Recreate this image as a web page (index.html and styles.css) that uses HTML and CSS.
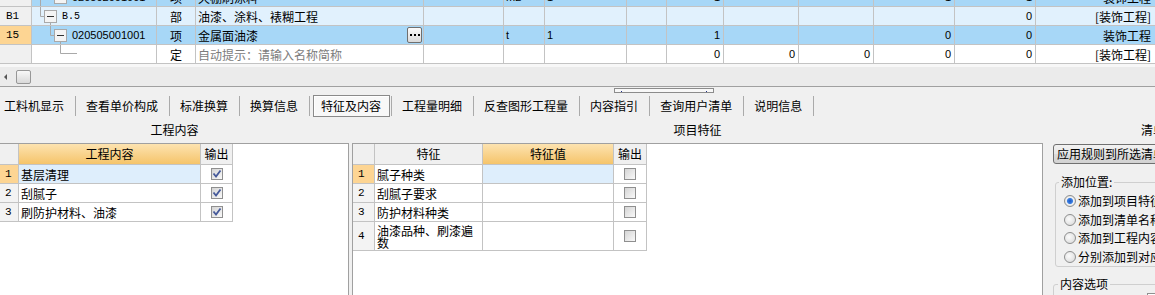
FILE: index.html
```html
<!DOCTYPE html>
<html lang="zh-CN">
<head>
<meta charset="utf-8">
<title>特征及内容</title>
<link rel="stylesheet" href="styles.css">
</head>
<body>
<div class="app">
  <div class="top-grid">
    <div class="trow partial sel">
      <div class="rn">14</div>
      <div class="tree">
        <svg width="40" height="18" viewBox="0 0 40 18"><path d="M8.5 0V18M18.5 0V9.5H22.5" stroke="#a9a9a9" fill="none"/><rect x="22.5" y="3.5" width="12" height="12" fill="#f4f4f4" stroke="#a9a9a9"/><path d="M25 9.5H32" stroke="#333"/></svg>
        <span class="code">020502001001</span>
      </div>
      <div class="c">项</div>
      <div>天棚刷涂料</div>
      <div></div>
      <div class="num">m2</div>
      <div class="num">1</div>
      <div></div>
      <div class="num r">1</div>
      <div></div>
      <div></div>
      <div class="num r">1</div>
      <div class="num r">1</div>
      <div class="r last">装饰工程</div>
    </div>
    <div class="trow light">
      <div class="rn">B1</div>
      <div class="tree">
        <svg width="30" height="18" viewBox="0 0 30 18"><path d="M8.5 0V9.5H12.5M18.5 15.5V18" stroke="#a9a9a9" fill="none"/><rect x="12.5" y="3.5" width="12" height="12" fill="#f4f4f4" stroke="#a9a9a9"/><path d="M15 9.5H22" stroke="#333"/></svg>
        <span class="mono">B.5</span>
      </div>
      <div class="c">部</div>
      <div>油漆、涂料、裱糊工程</div>
      <div></div>
      <div></div>
      <div></div>
      <div></div>
      <div></div>
      <div></div>
      <div></div>
      <div></div>
      <div class="num r">0</div>
      <div class="r last">[装饰工程]</div>
    </div>
    <div class="trow sel">
      <div class="rn cur">15</div>
      <div class="tree">
        <svg width="40" height="18" viewBox="0 0 40 18"><path d="M18.5 0V9.5H22.5M28.5 15.5V18" stroke="#a9a9a9" fill="none"/><rect x="22.5" y="3.5" width="12" height="12" fill="#f4f4f4" stroke="#a9a9a9"/><path d="M25 9.5H32" stroke="#333"/></svg>
        <span class="code">020505001001</span>
      </div>
      <div class="c">项</div>
      <div class="namecell"><span>金属面油漆</span><span class="ell"><i></i><i></i><i></i></span></div>
      <div></div>
      <div class="num">t</div>
      <div class="num">1</div>
      <div></div>
      <div class="num r">1</div>
      <div></div>
      <div></div>
      <div class="num r">0</div>
      <div class="num r">0</div>
      <div class="r last">装饰工程</div>
    </div>
    <div class="trow">
      <div class="rn"></div>
      <div class="tree">
        <svg width="46" height="18" viewBox="0 0 46 18"><path d="M28.5 0V8.5H45" stroke="#a9a9a9" fill="none"/></svg>
      </div>
      <div class="c">定</div>
      <div class="hint">自动提示：请输入名称简称</div>
      <div></div>
      <div></div>
      <div></div>
      <div></div>
      <div class="num r">0</div>
      <div class="num r">0</div>
      <div class="num r">0</div>
      <div class="num r">0</div>
      <div class="num r">0</div>
      <div class="r last">[装饰工程]</div>
    </div>
  </div>

  <div class="hscroll">
    <span class="arrow"></span>
    <span class="thumb"></span>
  </div>

  <div class="grip-row">
    <div class="grip"><i></i><i></i></div>
  </div>

  <div class="tabs">
    <span class="tab">工料机显示</span><i class="sep"></i>
    <span class="tab">查看单价构成</span><i class="sep"></i>
    <span class="tab">标准换算</span><i class="sep"></i>
    <span class="tab">换算信息</span><i class="sep"></i>
    <span class="tab active">特征及内容</span><i class="sep"></i>
    <span class="tab">工程量明细</span><i class="sep"></i>
    <span class="tab">反查图形工程量</span><i class="sep"></i>
    <span class="tab">内容指引</span><i class="sep"></i>
    <span class="tab">查询用户清单</span><i class="sep"></i>
    <span class="tab">说明信息</span><i class="sep"></i>
  </div>

  <div class="bottom">
    <div class="col col-left">
      <div class="title">工程内容</div>
      <div class="panel">
        <div class="g lgrid">
          <div class="h"></div>
          <div class="h o">工程内容</div>
          <div class="h">输出</div>

          <div class="rn cur">1</div>
          <div class="selc">基层清理</div>
          <div class="cbc"><span class="cb"><svg width="10" height="10" viewBox="0 0 10 10"><path d="M1.5 4.5L4 7.5L8.5 1.5" stroke="#45599a" stroke-width="1.8" fill="none"/></svg></span></div>

          <div class="rn">2</div>
          <div>刮腻子</div>
          <div class="cbc"><span class="cb"><svg width="10" height="10" viewBox="0 0 10 10"><path d="M1.5 4.5L4 7.5L8.5 1.5" stroke="#45599a" stroke-width="1.8" fill="none"/></svg></span></div>

          <div class="rn">3</div>
          <div>刷防护材料、油漆</div>
          <div class="cbc"><span class="cb"><svg width="10" height="10" viewBox="0 0 10 10"><path d="M1.5 4.5L4 7.5L8.5 1.5" stroke="#45599a" stroke-width="1.8" fill="none"/></svg></span></div>
        </div>
      </div>
    </div>

    <div class="col col-mid">
      <div class="title">项目特征</div>
      <div class="panel">
        <div class="g mgrid">
          <div class="h"></div>
          <div class="h">特征</div>
          <div class="h o">特征值</div>
          <div class="h">输出</div>

          <div class="rn cur">1</div>
          <div>腻子种类</div>
          <div class="selc"></div>
          <div class="cbc"><span class="cb"></span></div>

          <div class="rn">2</div>
          <div>刮腻子要求</div>
          <div></div>
          <div class="cbc"><span class="cb"></span></div>

          <div class="rn">3</div>
          <div>防护材料种类</div>
          <div></div>
          <div class="cbc"><span class="cb"></span></div>

          <div class="rn tall">4</div>
          <div class="tall wrap">油漆品种、刷漆遍数</div>
          <div class="tall"></div>
          <div class="cbc tall"><span class="cb"></span></div>
        </div>
      </div>
    </div>

    <div class="col col-right">
      <div class="title">清单规则</div>
      <div class="rbody">
        <div class="apply">应用规则到所选清单</div>
        <fieldset class="grp grp1">
          <legend>添加位置:</legend>
          <div class="ropt"><span class="rb on"></span><span>添加到项目特征列</span></div>
          <div class="ropt"><span class="rb"></span><span>添加到清单名称列</span></div>
          <div class="ropt"><span class="rb"></span><span>添加到工程内容列</span></div>
          <div class="ropt"><span class="rb"></span><span>分别添加到对应列</span></div>
        </fieldset>
        <fieldset class="grp grp2">
          <legend>内容选项</legend>
          <div class="inbox"></div>
        </fieldset>
      </div>
    </div>
  </div>
</div>
</body>
</html>
```

FILE: styles.css
```css
* {
  box-sizing: border-box;
}

html,
body {
  margin: 0;
  padding: 0;
}

body {
  width: 1155px;
  height: 295px;
  overflow: hidden;
  background: #f0f0f0;
  font-family: "Noto Sans CJK SC", "Liberation Sans", sans-serif;
  font-size: 12px;
  line-height: 1.2;
  color: #000;
}

/* ---------- top grid ---------- */
.top-grid {
  height: 64px;
  overflow: hidden;
  background: #fff;
}

.trow {
  display: grid;
  grid-template-columns: 32px 125px 39px 228px 80px 41px 82px 40px 57px 75px 75px 81px 81px 119px;
  height: 19px;
}

.trow.partial {
  margin-top: -12px;
}

.trow > div {
  border-right: 1px solid #c3c3c3;
  border-bottom: 1px solid #c3c3c3;
  overflow: hidden;
  white-space: nowrap;
  line-height: 19px;
  padding: 0 2px;
  background: #fff;
}

.trow.sel > div {
  background: #a7d7f7;
}

.trow.light > div {
  background: #e1f1fd;
}

.trow > div.rn {
  background: #f0f0f0;
  font-family: "Liberation Mono", monospace;
  font-size: 11px;
  padding-left: 6px;
}

.trow > div.rn.cur {
  background: #fdd593;
}

.trow > .c {
  text-align: center;
}

.trow > .r {
  text-align: right;
  padding-right: 3px;
}

.trow > .last {
  padding-right: 4px;
  border-right: 0;
}

.trow > div.tree {
  display: flex;
  align-items: flex-start;
  padding: 0;
}

.tree svg {
  flex: none;
  display: block;
}

.num,
.code {
  font-family: "Liberation Sans", sans-serif;
  font-size: 11px;
}

.mono {
  font-family: "Liberation Mono", monospace;
  font-size: 10px;
}

.hint {
  color: #7c7c7c;
}

.trow > div.namecell {
  display: flex;
  align-items: center;
  padding-right: 1px;
}

.ell {
  margin-left: auto;
  flex: none;
  width: 15px;
  height: 16px;
  border: 1px solid #6f6f6f;
  border-radius: 2px;
  background: linear-gradient(#fbfbfb, #dadada);
  display: flex;
  align-items: center;
  justify-content: center;
  gap: 2px;
}

.ell i {
  width: 2px;
  height: 2px;
  background: #000;
}

/* ---------- scrollbar & splitter ---------- */
.hscroll {
  height: 23px;
  background: #ebebeb;
  border-top: 3px solid #f7f7f7;
  border-bottom: 1px solid #a0a0a0;
  display: flex;
  align-items: center;
}

.arrow {
  width: 0;
  height: 0;
  border-top: 3px solid transparent;
  border-bottom: 3px solid transparent;
  border-right: 3px solid #555;
  margin-left: 4px;
}

.thumb {
  width: 15px;
  height: 14px;
  margin-left: 9px;
  border: 1px solid #979797;
  border-radius: 2px;
  background: linear-gradient(#f8f8f8, #d9d9d9);
}

.grip-row {
  height: 7px;
}

.grip {
  margin: 1px 0 0 614px;
  width: 100px;
  height: 5px;
  border: 1px solid #8c8c8c;
  background: #f8f8f8;
  display: flex;
  justify-content: space-between;
  padding: 2px 6px 0;
}

.grip i {
  width: 1px;
  height: 1px;
  background: #22338a;
}

/* ---------- tabs ---------- */
.tabs {
  height: 22px;
  display: flex;
  align-items: center;
  padding-left: 4px;
}

.tab {
  line-height: 14px;
  white-space: nowrap;
  flex: none;
}

.sep {
  flex: none;
  width: 1px;
  height: 20px;
  background: #aaaaaa;
  margin: 0 10px 0 11px;
}

.tab.active {
  margin: 0 -10px 0 -7px;
  padding: 0 8px 0 7px;
  height: 22px;
  line-height: 20px;
  border: 1px solid #8a8a8a;
  background: #f8f8f8;
  box-shadow: inset 1px 1px 0 #ffffff;
}

/* ---------- bottom panels ---------- */
.bottom {
  display: flex;
  height: 179px;
}

.col {
  flex: none;
}

.col-left {
  width: 349px;
}

.col-mid {
  width: 691px;
  margin-left: 3px;
}

.col-right {
  width: 244px;
}

.title {
  height: 26px;
  line-height: 26px;
  text-align: center;
  white-space: nowrap;
}

.panel {
  height: 153px;
  background: #fff;
  border-top: 1px solid #a0a0a0;
}

.col-left .panel {
  border-right: 1px solid #a0a0a0;
}

.col-mid .panel {
  border-left: 1px solid #a0a0a0;
  border-right: 1px solid #a0a0a0;
}

.g {
  display: grid;
}

.lgrid {
  grid-template-columns: 19px 182px 32px;
  width: 233px;
}

.mgrid {
  grid-template-columns: 22px 108px 131px 33px;
  width: 294px;
}

.g > div {
  border-right: 1px solid #c3c3c3;
  border-bottom: 1px solid #c3c3c3;
  height: 19px;
  line-height: 19px;
  padding: 0 2px;
  white-space: nowrap;
  overflow: hidden;
}

.g > div.h {
  height: 21px;
  line-height: 20px;
  background: #f0f0f0;
  text-align: center;
}

.g > div.h.o {
  background: linear-gradient(#fde3b0, #f5c46a);
}

.g > div.rn {
  background: #f3f3f3;
  font-family: "Liberation Mono", monospace;
  font-size: 11px;
  padding-left: 5px;
}

.g > div.rn.cur {
  background: #fdd593;
}

.g > div.selc {
  background: #deeefc;
}

.g > div.cbc {
  display: flex;
  align-items: center;
  justify-content: center;
}

.g > div.tall {
  height: 29px;
}

.g > div.rn.tall {
  line-height: 29px;
}

.g > div.wrap {
  white-space: normal;
  line-height: 12px;
  padding-top: 3px;
}

.cb {
  width: 12px;
  height: 12px;
  border: 1px solid #8f8f8f;
  background: linear-gradient(135deg, #d4d4d4, #f9f9f9);
  display: flex;
  align-items: center;
  justify-content: center;
}

.cb svg {
  display: block;
}

/* ---------- right side ---------- */
.rbody {
  padding-left: 10px;
}

.apply {
  margin-top: 1px;
  width: 116px;
  height: 20px;
  border: 1px solid #707070;
  border-radius: 3px;
  background: linear-gradient(#f2f2f2, #e6e6e6 50%, #dcdcdc 51%, #d2d2d2);
  line-height: 18px;
  text-align: center;
  white-space: nowrap;
}

.grp {
  width: 250px;
  border: 1px solid #cfcfcf;
  border-radius: 3px;
  min-width: 0;
}

.grp legend {
  padding: 0 2px;
  line-height: 12px;
  white-space: nowrap;
}

.grp1 {
  margin: 12px 0 0 2px;
  padding: 4px 0 0 3px;
}

.grp2 {
  margin: 11px 0 0 0;
  padding: 0 0 0 4px;
  height: 40px;
}

.ropt {
  display: flex;
  align-items: center;
  gap: 2px;
  height: 18.6px;
  margin-left: 5px;
  white-space: nowrap;
}

.rb {
  flex: none;
  width: 12px;
  height: 12px;
  border-radius: 50%;
  border: 1px solid #8e8f8f;
  background: radial-gradient(circle at 40% 40%, #fbfbfb, #d6d6d6);
}

.rb.on {
  background: radial-gradient(circle, #1b55c2 0, #3f82e2 2.6px, #f4f4f4 3.6px, #d8d8d8 6px);
}

.inbox {
  margin: 3px 0 0 89px;
  width: 40px;
  height: 16px;
  border: 1px solid #8f8f8f;
  background: #fff;
}
```
